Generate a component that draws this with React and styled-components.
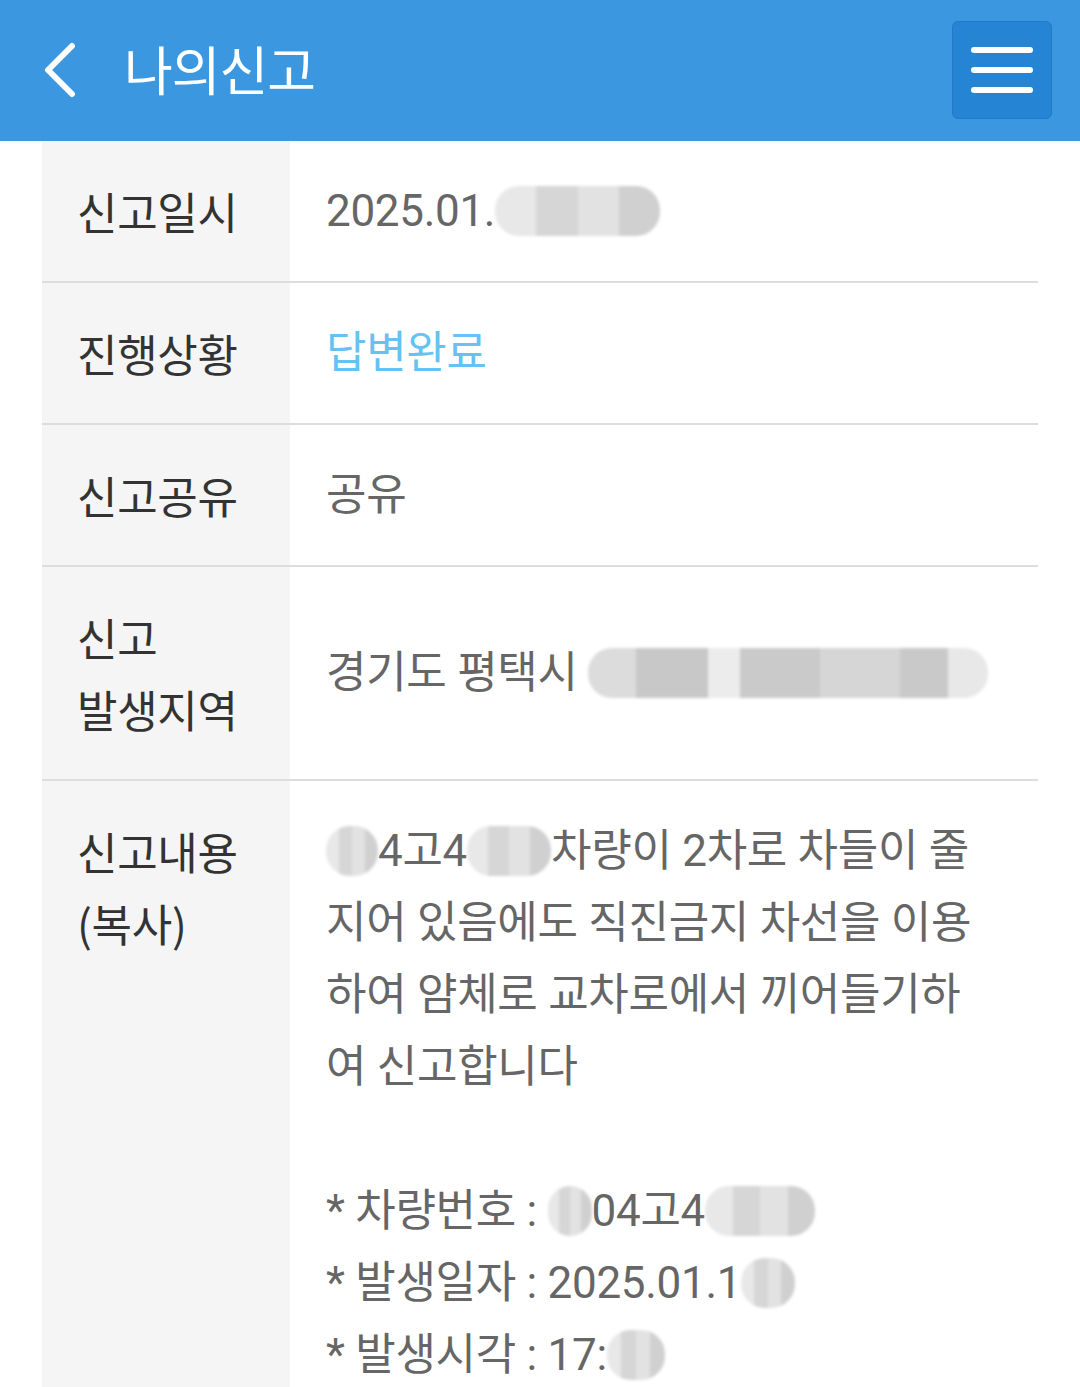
import styled, { createGlobalStyle } from 'styled-components';

const GlobalStyle = createGlobalStyle`
  html, body {
    margin: 0;
    padding: 0;
    background: #ffffff;
  }
  body {
    font-family: Roboto, 'Noto Sans CJK KR', sans-serif;
  }
`;

const rows = [
  { label: ['신고일시'], value: 'date' },
  { label: ['진행상황'], value: 'status' },
  { label: ['신고공유'], value: 'share' },
  { label: ['신고', '발생지역'], value: 'area' },
  { label: ['신고내용', '(복사)'], value: 'content' },
];

const BackIcon = () => (
  <svg width='40' height='60' viewBox='0 0 40 60'>
    <path
      d='M28 6 L4 30 L28 54'
      fill='none'
      stroke='#ffffff'
      strokeWidth='6'
      strokeLinecap='round'
      strokeLinejoin='round'
    />
  </svg>
);

const Redact = ({ w, tone }) => <RedactStyle w={w} tone={tone} />;

const renderValue = (type) => {
  if (type === 'date') {
    return (
      <ValueLine>
        2025.01.
        <Redact w={165} />
      </ValueLine>
    );
  }
  if (type === 'status') return <ValueLine status>답변완료</ValueLine>;
  if (type === 'share') return <ValueLine>공유</ValueLine>;
  if (type === 'area') {
    return (
      <ValueLine>
        경기도 평택시 <Redact w={400} tone='dark' />
      </ValueLine>
    );
  }
  return (
    <>
      <ValueLine>
        <Redact w={52} />
        4고4
        <Redact w={84} />
        차량이 2차로 차들이 줄
      </ValueLine>
      <ValueLine>지어 있음에도 직진금지 차선을 이용</ValueLine>
      <ValueLine>하여 얌체로 교차로에서 끼어들기하</ValueLine>
      <ValueLine>여 신고합니다</ValueLine>
      <ValueLine>&nbsp;</ValueLine>
      <ValueLine>
        * 차량번호 : <Redact w={44} />
        04고4
        <Redact w={110} />
      </ValueLine>
      <ValueLine>
        * 발생일자 : 2025.01.1
        <Redact w={54} />
      </ValueLine>
      <ValueLine>
        * 발생시각 : 17:
        <Redact w={58} />
      </ValueLine>
    </>
  );
};

const App = () => {
  return (
    <>
      <GlobalStyle />
      <Header>
        <TitleGroup>
          <BackButton>
            <BackIcon />
          </BackButton>
          <Title>나의신고</Title>
        </TitleGroup>
        <MenuButton>
          <span />
          <span />
          <span />
        </MenuButton>
      </Header>
      <Table>
        {rows.map((row, i) => (
          <Row key={row.value} last={i === rows.length - 1}>
            <LabelCell>
              {row.label.map((l) => (
                <div key={l}>{l}</div>
              ))}
            </LabelCell>
            <ValueCell>{renderValue(row.value)}</ValueCell>
          </Row>
        ))}
      </Table>
    </>
  );
};

const Header = styled.header`
  height: 141px;
  background-color: #3a97e0;
  display: flex;
  align-items: center;
  justify-content: space-between;
  padding: 0 28px 0 44px;
  box-sizing: border-box;
`;

const TitleGroup = styled.div`
  display: flex;
  align-items: center;
  gap: 40px;
`;

const BackButton = styled.div`
  display: flex;
  align-items: center;
  margin-top: -2px;
`;

const Title = styled.h1`
  margin: 0;
  color: #ffffff;
  font-family: 'Noto Sans CJK KR', sans-serif;
  font-size: 53px;
  font-weight: 400;
  letter-spacing: -1px;
  line-height: 1;
  margin-top: -4px;
`;

const MenuButton = styled.div`
  width: 100px;
  height: 98px;
  margin-top: -2px;
  box-sizing: border-box;
  background-color: #2684d4;
  border: 1px solid #2479c6;
  border-radius: 6px;
  display: flex;
  flex-direction: column;
  align-items: center;
  justify-content: center;
  gap: 14px;

  span {
    display: block;
    width: 62px;
    height: 6px;
    border-radius: 3px;
    background: #ffffff;
  }
`;

const Table = styled.div`
  margin: 0 42px;
`;

const Row = styled.div`
  display: grid;
  grid-template-columns: 248px 1fr;
  border-bottom: ${({ last }) => (last ? 'none' : '2px solid #dddddd')};
`;

const LabelCell = styled.div`
  background-color: #f5f5f5;
  padding: 34px 0 34px 35px;
  color: #333333;
  font-family: 'Noto Sans CJK KR', sans-serif;
  font-size: 44px;
  line-height: 72px;
  letter-spacing: -0.3px;
`;

const ValueCell = styled.div`
  padding: 34px 20px 34px 36px;
  display: flex;
  flex-direction: column;
  justify-content: center;
`;

const ValueLine = styled.div`
  color: ${({ status }) => (status ? '#66c2f3' : '#666666')};
  font-family: Roboto, 'Noto Sans CJK KR', sans-serif;
  font-size: 44px;
  line-height: 72px;
  letter-spacing: -0.3px;
  white-space: nowrap;
`;

const RedactStyle = styled.span`
  display: inline-block;
  vertical-align: middle;
  width: ${({ w }) => w}px;
  height: 50px;
  margin-top: -6px;
  border-radius: 24px;
  filter: blur(1.5px);
  background: ${({ tone }) =>
    tone === 'dark'
      ? 'linear-gradient(90deg, #dcdcdc 0 12%, #c8c8c8 12% 30%, #ececec 30% 38%, #cacaca 38% 58%, #d6d6d6 58% 78%, #c9c9c9 78% 90%, #e8e8e8 90%)'
      : 'linear-gradient(90deg, #e8e8e8 0 25%, #d6d6d6 25% 50%, #e2e2e2 50% 75%, #d0d0d0 75%)'};
`;

export default App;
